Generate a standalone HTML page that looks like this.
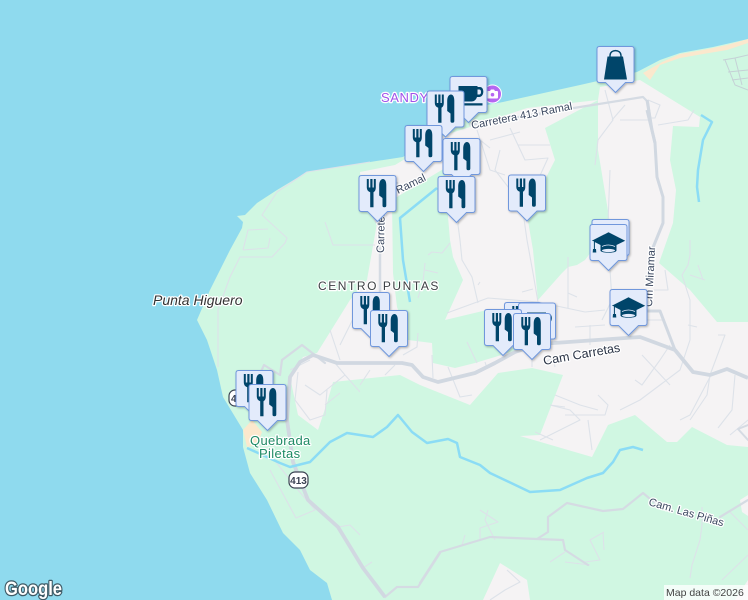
<!DOCTYPE html>
<html><head><meta charset="utf-8"><style>
html,body{margin:0;padding:0;width:748px;height:600px;overflow:hidden;background:#8fdaee}
svg{display:block}
text{font-family:"Liberation Sans",sans-serif}
.h{paint-order:stroke;stroke:#fff;stroke-width:2.5px;stroke-linejoin:round}
.r{fill:#3b4860;font-size:11px}
</style></head><body>
<svg width="748" height="600" viewBox="0 0 748 600" xmlns="http://www.w3.org/2000/svg">
<defs>
<path id="m" d="M3,.5H35Q37.5,.5 37.5,3V34Q37.5,36.5 35,36.5H29L19,46.5 9,36.5H3Q.5,36.5 .5,34V3Q.5,.5 3,.5Z" fill="#e3ebfb" stroke="#6f97dc" stroke-width="1"/>
<g id="f"><use href="#m"/><path fill="#03446a" d="M8.300,4H10.300V12.500H11.800V4H14V12.500H15.300V4H17.300V12.500Q17.300,16 15,17.200V32.300H11.700V17.200Q8.300,16 8.300,12.500ZM20.700,10.500C20.700,6.500 22.300,4 24.400,4 26.700,4 27.800,6.500 27.800,10V30.500Q27.800,32.300 26,32.300H25.700Q24,32.300 24,30.500V23L20.700,20.500Z"/></g>
<g id="g"><use href="#m"/><path fill="#03446a" d="M19,8.300 35.700,16.700 27,21V26.500C27,29.500 11,29.500 11,26.500V21L5.400,18.100V25H6.500L6.800,28.500H3.200L3.500,25H4.400V17.300L2.300,16.700Z"/><ellipse cx="19" cy="26.500" rx="6.500" ry="1.600" fill="#e3ebfb"/><path d="M12.500,22.500Q19,19.500 25.500,22.500" stroke="#e3ebfb" stroke-width=".8" fill="none"/></g>
<g id="b"><use href="#m"/><path fill="#03446a" d="M11,10.500H26.500L30.500,33.500H7.500Z"/><path d="M13.500,12V9.500C13.500,3 24.500,3 24.500,9.500V12" fill="none" stroke="#03446a" stroke-width="1.400"/></g>
<g id="c"><use href="#m"/><path fill="#03446a" d="M9,10H28V11H30.500C35,11 35,20.500 30,21H27.500C26.500,24 24.500,25.500 22,25.500H15C11,25.500 9,21 9,17ZM28,13.500V18.500H30C32,18.500 32,13.500 30,13.500ZM12,27.200H33V29.500H15Z"/></g>
<filter id="s" x="-20%" y="-20%" width="150%" height="150%"><feDropShadow dx="1" dy="1" stdDeviation="1" flood-color="#000" flood-opacity=".28"/></filter>
</defs>

<rect width="748" height="600" fill="#8fdaee"/>
<!-- land -->
<path fill="#d0f7e2" d="M748,39 713,47 680,53 660,60 637,72 580,85 503,102 487,105 460,118 440,130 403,157 370,162 307,172 277,190 257,203 245,215 237,216 243,222 242,228 230,250 210,290 197,320 207,340 217,370 223,397 243,430 243,447 250,473 267,500 283,533 300,550 310,570 327,583 332,600H748Z"/>
<path fill="#fbe8cd" d="M643,73 662,62 680,54 703,50 727,45 748,39V43L727,50 703,54 680,58 660,65 650,80Z"/>
<path fill="#fbe8cd" d="M243,430 252,420 262,432 257,445 247,447Z"/>
<!-- urban -->
<path fill="#f5f3f4" d="M360,172 395,165 420,150 445,135 470,127 527,108 598,100 600,87 640,80 700,117 699,127 673,126 670,160 676,190 673,223 659,263 690,290 717,322H748V447L727,445 692,427 677,442 667,442 635,415 608,425 592,457 520,436 540,435 563,375 532,368 498,373 470,405 420,385 400,375 333,382 327,403 318,430 298,415 290,377 303,357 317,353 350,300 367,280 377,223 362,190Z"/>
<path fill="#f5f3f4" d="M483,600 500,563 527,580 530,600Z"/>
<path fill="#f5f3f4" d="M740,500 748,495V516L742,512Z"/>
<path fill="#f5f3f4" d="M735,600 748,580V600Z"/>
<!-- inner green -->
<path fill="#d0f7e2" d="M392,200 445,168 447,205 450,240 453,257 463,280 445,320 487,310 495,335 517,350 495,357 475,363 455,368 433,363 432,343 408,340 403,323 397,307 393,273Z"/>
<path fill="#d0f7e2" d="M598,100 598,150 610,223 600,240 585,260 577,265 568,267 562,273 538,300 533,250 527,215 555,160 545,128Z"/>
<!-- thin roads -->
<g fill="none" stroke="#dde2e9" stroke-width="1.100" stroke-linejoin="round">
<path d="M218,367V310L230,277 240,257H272L285,243 287,238 262,215 277,192 307,172 370,162"/>
<path d="M243,250 248,230 268,229M270,238 268,248 243,250"/>
<path d="M325,222 333,245H375"/>
<path d="M460,240 462,260 472,277 478,303M447,313 488,298 538,302 585,312M527,240 533,273 538,302M522,292 533,289M480,282 478,285M568,257V308M568,293 577,297M462,190 458,225 460,240M522,205 527,240M500,150 495,170 522,205"/>
<path d="M428,255 432,252 442,253 450,243M425,263 423,282 418,298M425,270 438,273"/>
<path d="M467,342 477,363M485,362 487,368M432,355 433,378M448,367 460,397 472,395M418,333 417,347 403,355M532,357V367M545,363 553,357 555,367M550,405 565,407"/>
<path d="M470,148 480,140 490,148M490,140 520,132M510,128 525,160 548,158 538,180M518,145 550,145M477,130 490,170 505,175"/>
<path d="M605,90 613,120 598,140 595,165M612,120 625,105M648,100 660,105 655,118 650,118M620,120 650,120M658,125 688,120 694,110M610,170 608,223"/>
<path d="M585,312 605,310M610,270 612,300 602,320M590,325V345M575,327 605,325"/>
<path d="M340,345 360,305M330,330 340,360"/>
<path d="M598,395 608,405 605,415 565,415M555,395 580,405 598,410M550,405 570,410 580,420 540,440M535,432 553,440M588,420 592,450M670,345 660,360 642,385 635,380M670,385 642,355M710,377 690,415 680,420M735,375 732,410 718,428M748,420 730,435"/>
<path d="M690,240 690,255 688,265 682,275 690,300 690,340 680,370 660,385 640,400 620,410M690,275 705,280M703,280 698,265M688,325 697,327M718,335 725,335 710,375 707,395 690,420"/>
<path d="M640,320 665,320M650,290 668,290 665,270M648,285V270"/>
<path d="M268,450 276,462 298,490 315,510 296,518 270,470M338,527 350,525 360,535M363,568 372,562"/>
<path d="M310,360 290,370M305,385 320,395 345,375M345,375 360,392M340,393 325,405M335,363 345,375M370,370 360,385M395,365 385,375M298,372 295,400 310,420 325,415 327,390"/>
<path d="M488,510 485,520 495,540M480,510 498,522 480,528 480,540M465,535 462,545"/>
<path d="M604,532 590,540 600,560 585,562M604,550 603,532M550,562 565,552M565,562 590,565M702,507 702,525 700,540 692,565 690,578M730,512 748,530M722,580 748,555"/>
<path d="M507,570 520,582 505,590 490,600"/>
</g>
<path fill="none" stroke="#c5d1d6" stroke-width="1" d="M723,60 735,58 748,55M725,60 735,85 748,90M735,58 742,85M748,70 728,72M748,78 732,80"/>
<!-- medium roads -->
<g fill="none" stroke="#d5dbe3" stroke-linejoin="round" stroke-linecap="round">
<path stroke-width="2.200" d="M258,378 264,365 280,375 282,360 302,345 325,363"/>
<path stroke-width="2.200" d="M420,583 440,552 490,537 537,539 548,532 548,517 567,503 603,511 623,509 643,493 655,503M720,517 748,500M537,539 563,540 565,550 588,565M385,597 397,587 418,587 440,553"/>
<path stroke-width="2" d="M748,425 738,429 748,440"/>
<path stroke-width="2.500" d="M380,225V295M397,183 365,200 378,225"/>
<path stroke-width="2.200" d="M470,125 580,107 643,97 648,102 652,130"/>
</g>
<!-- main roads -->
<g fill="none" stroke="#d1d8e1" stroke-linejoin="round">
<path stroke-width="3.800" d="M385,597 363,568 338,527 308,500 293,462 287,420 290,377 300,362 313,355 337,363 402,363 412,365 423,377 438,382 475,373 495,363 515,352 540,344 640,337 675,350 693,372 710,375 727,369 748,378"/>
<path stroke-width="3" d="M647,110 655,143 657,177 663,197 663,223 652,250M640,311H660L675,350"/>
<path stroke-width="3" d="M647,100 652,130 655,143"/>
</g>
<!-- rivers -->
<g fill="none" stroke="#8bdcf5" stroke-width="2.500" stroke-linejoin="round">
<path d="M247,448 280,463 290,467 310,462 330,442 347,433 373,437 387,427 398,415 412,432 427,443 448,439 457,443 460,457 480,465 490,473 530,492 560,490 587,478 603,473 613,462 620,450 633,447 643,450"/>
<path d="M437,188 400,218 403,260 410,302"/>
<path d="M701,115 712,122 703,140 698,170 697,187 699,202"/>
</g>
<!-- labels -->
<text x="381" y="102" font-size="13" fill="#a152ea" class="h" letter-spacing=".6">SANDY</text>
<circle cx="492.500" cy="94" r="9" fill="#b566f2" stroke="#fff" stroke-width="1"/>
<path d="M488,91H490L491,89.500H494L495,91H497Q498,91 498,92V97.500Q498,98.500 497,98.500H488Q487,98.500 487,97.500V92Q487,91 488,91Z" fill="#fff"/><circle cx="492.500" cy="94.700" r="1.800" fill="#b566f2"/>
<text class="h r" transform="translate(472,129) rotate(-11)">Carretera 413 Ramal</text>
<text class="h r" transform="translate(398,194) rotate(-26)" font-size="11.500">Ramal</text>
<text class="h r" transform="translate(384,253) rotate(-89)">Carretera</text>
<text class="h" x="318" y="290" font-size="12" fill="#3c4043" letter-spacing="1.550">CENTRO PUNTAS</text>
<text class="h" x="153" y="305" font-size="14" font-style="italic" fill="#333">Punta Higuero</text>
<text class="h" transform="translate(544,365) rotate(-10)" font-size="12.500" fill="#2b3446">Cam Carretas</text>
<text class="h r" transform="translate(652,307) rotate(-87)" font-size="11">Cm Miramar</text>
<text class="h r" transform="translate(648,505) rotate(16)" font-size="11">Cam. Las Piñas</text>
<text class="h" x="250" y="445" font-size="13" fill="#1e8a64" letter-spacing=".350">Quebrada</text>
<text class="h" x="259" y="458" font-size="13" fill="#1e8a64" letter-spacing=".350">Piletas</text>
<rect x="289" y="472" width="19" height="16" rx="6" fill="#fff" stroke="#3b4252" stroke-width="1.200"/>
<text x="298.500" y="484" font-size="10" fill="#3b4252" text-anchor="middle" font-weight="bold">413</text>
<rect x="229" y="390" width="19" height="16" rx="6" fill="#fff" stroke="#3b4252" stroke-width="1.200"/>
<text x="231" y="402" font-size="10" fill="#3b4252" font-weight="bold">4</text>
<!-- markers -->
<g filter="url(#s)">
<use href="#c" x="449.500" y="76"/>
<use href="#f" x="426.500" y="90.500"/>
<use href="#f" x="404.500" y="125"/>
<use href="#f" x="442.500" y="138"/>
<use href="#f" x="358.500" y="175"/>
<use href="#f" x="437.500" y="176"/>
<use href="#f" x="508" y="174.500"/>
<use href="#b" x="596.500" y="46"/>
<use href="#g" x="591.500" y="219"/>
<use href="#g" x="589.500" y="224"/>
<use href="#g" x="609.500" y="289"/>
<use href="#f" x="504" y="302"/>
<use href="#c" x="518" y="302.500"/>
<use href="#f" x="484" y="309"/>
<use href="#f" x="513" y="313"/>
<use href="#f" x="352" y="292"/>
<use href="#f" x="370" y="310"/>
<use href="#f" x="235.500" y="370"/>
<use href="#f" x="248.500" y="384"/>
</g>
<!-- attribution -->
<rect x="664" y="585" width="84" height="15" fill="#fff" fill-opacity=".75"/>
<text x="666" y="596" font-size="10.500" fill="#444">Map data ©2026</text>
<text x="5" y="595" font-size="19" font-weight="bold" fill="#fff" stroke="#3e5a66" stroke-width="2.600" stroke-linejoin="round" style="paint-order:stroke" textLength="57" lengthAdjust="spacingAndGlyphs">Google</text>
</svg>
</body></html>
